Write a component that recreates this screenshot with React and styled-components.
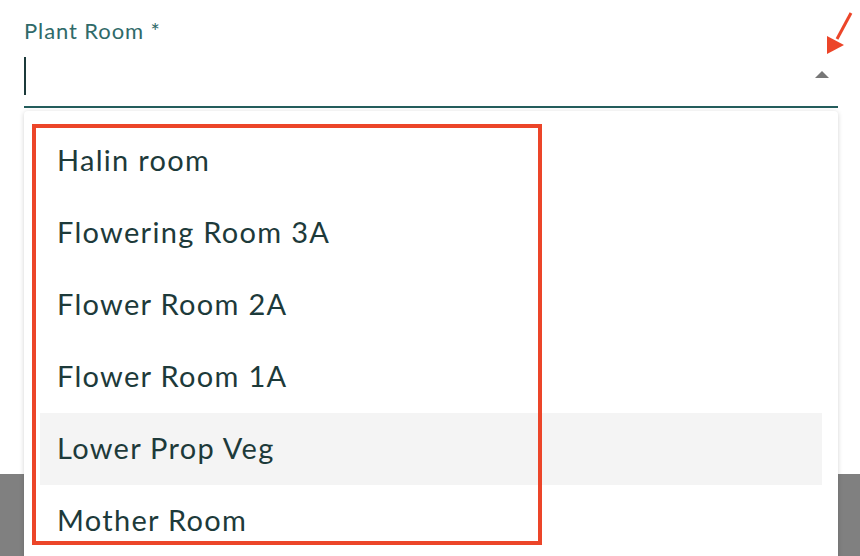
import React from "react";
import styled, { createGlobalStyle } from "styled-components";

const Global = createGlobalStyle`
  html, body { margin: 0; padding: 0; background: #fff; }
  body { overflow: hidden; font-family: "Lato", "Noto Sans", sans-serif; }
`;

const Page = styled.div`
  position: relative;
  width: 860px;
  height: 556px;
  overflow: hidden;
  display: flex;
  flex-direction: column;
`;

const Sheet = styled.div`
  height: 474px;
  background: #fff;
  padding: 16px 22px 0 24px;
  box-sizing: border-box;
`;

const Backdrop = styled.div`
  flex: 1;
  background: #808080;
`;

const Field = styled.div`
  display: flex;
  flex-direction: column;
`;

const Label = styled.label`
  font-size: 22px;
  line-height: 30px;
  color: #2f6a69;
  letter-spacing: 0.9px;
`;

const InputRow = styled.div`
  height: 60px;
  border-bottom: 2px solid #245d5c;
  display: flex;
  align-items: center;
  justify-content: space-between;
`;

const Caret = styled.span`
  width: 2px;
  height: 38px;
  background: #1c3a3a;
`;

const Arrow = styled.span`
  width: 0;
  height: 0;
  border-left: 7px solid transparent;
  border-right: 7px solid transparent;
  border-bottom: 7px solid #777;
  margin-right: 9px;
  margin-bottom: 4px;
`;

const Menu = styled.ul`
  position: absolute;
  top: 111px;
  left: 24px;
  width: 814px;
  bottom: -40px;
  margin: 0;
  padding: 14px 16px;
  box-sizing: border-box;
  list-style: none;
  background: #fff;
  border-radius: 4px;
  box-shadow: 0 1px 5px rgba(0, 0, 0, 0.18);
`;

const Item = styled.li`
  height: 72px;
  box-sizing: border-box;
  display: flex;
  align-items: center;
  padding: 0 0 3px 17px;
  font-size: 29px;
  letter-spacing: 1.3px;
  color: #1d3a3a;
  background: ${(p) => (p.$active ? "#f4f4f4" : "transparent")};
`;

const Highlight = styled.div`
  position: absolute;
  left: 32px;
  top: 124px;
  width: 510px;
  height: 421px;
  border: 4px solid #ec4529;
  box-sizing: border-box;
  pointer-events: none;
`;

const Pointer = styled.svg`
  position: absolute;
  left: 815px;
  top: 5px;
`;

const items = [
  "Halin room",
  "Flowering Room 3A",
  "Flower Room 2A",
  "Flower Room 1A",
  "Lower Prop Veg",
  "Mother Room",
];

export default function App() {
  return (
    <Page>
      <Global />
      <Sheet>
        <Field>
          <Label>Plant Room *</Label>
          <InputRow>
            <Caret />
            <Arrow />
          </InputRow>
        </Field>
      </Sheet>
      <Backdrop />
      <Menu>
        {items.map((t, i) => (
          <Item key={t} $active={i === 4}>
            {t}
          </Item>
        ))}
      </Menu>
      <Highlight />
      <Pointer width="45" height="55" viewBox="0 0 45 55">
        <line x1="36" y1="8" x2="22" y2="34" stroke="#ec4529" strokeWidth="3" />
        <polygon points="12,49 12,31 29,40" fill="#ec4529" />
      </Pointer>
    </Page>
  );
}
